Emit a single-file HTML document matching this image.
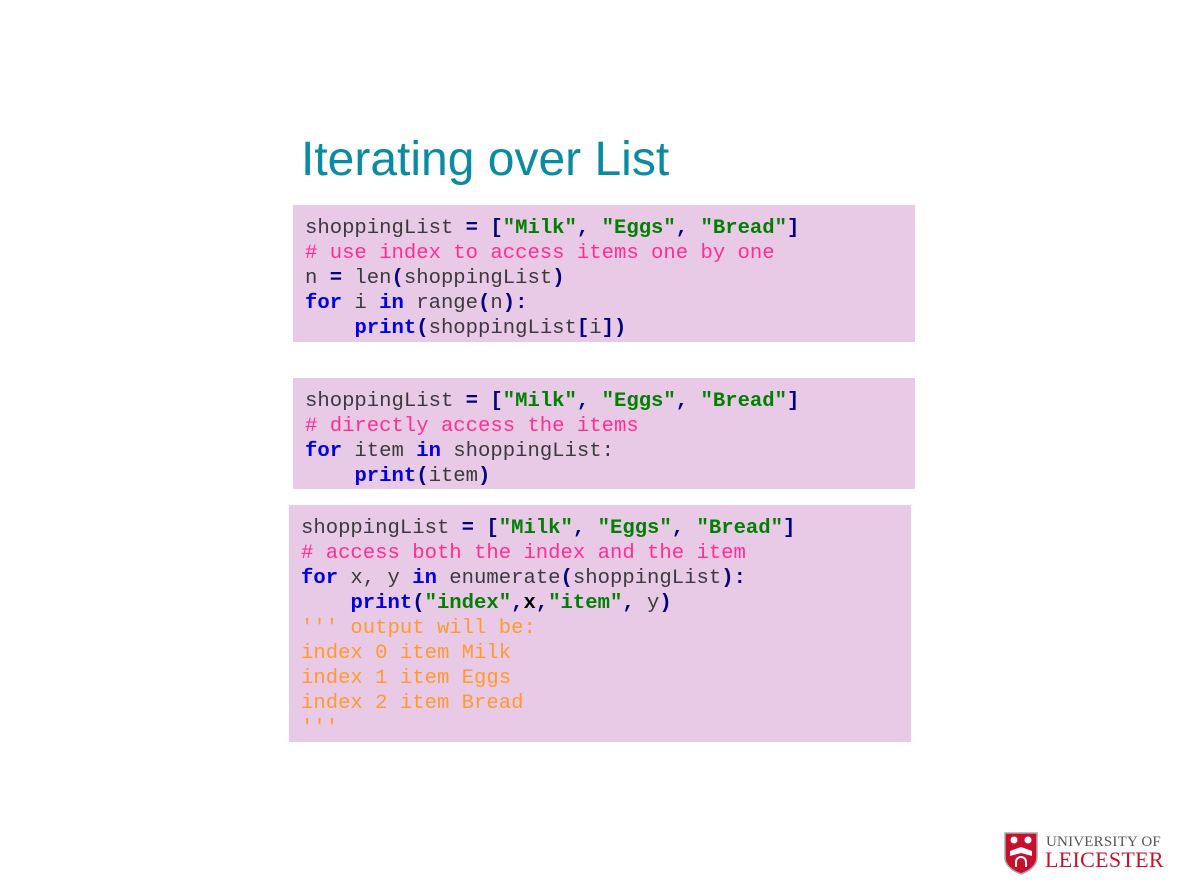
<!DOCTYPE html>
<html><head><meta charset="utf-8"><style>
body{margin:0;width:1188px;height:891px;background:#fff;position:relative;overflow:hidden}
h1{position:absolute;left:301px;top:128px;margin:0;font:48px "Liberation Sans",sans-serif;color:#0a8aa3;font-weight:normal;line-height:64px}
.box{position:absolute;background:#e9cae6;box-sizing:border-box;font-family:"Liberation Mono","Courier New",monospace;font-size:20.6px;line-height:25px;white-space:pre;color:#3a3a3a}
.o{color:#000080;font-weight:bold}.s{color:#008000;font-weight:bold}.c{color:#ff2d95}.k{color:#0000e0;font-weight:bold}.d{color:#ff9a30}.b{color:#000;font-weight:bold}
</style></head><body>
<h1>Iterating over List</h1>
<div class="box" style="left:293px;top:205px;width:622px;height:137px;padding:11px 0 0 12px">shoppingList <span class="o">= [</span><span class="s">"Milk"</span><span class="o">,</span> <span class="s">"Eggs"</span><span class="o">,</span> <span class="s">"Bread"</span><span class="o">]</span>
<span class="c"># use index to access items one by one</span>
n <span class="o">=</span> len<span class="o">(</span>shoppingList<span class="o">)</span>
<span class="k">for</span> i <span class="k">in</span> range<span class="o">(</span>n<span class="o">):</span>
    <span class="k">print</span><span class="o">(</span>shoppingList<span class="o">[</span>i<span class="o">])</span></div>
<div class="box" style="left:293px;top:378px;width:622px;height:111px;padding:11px 0 0 12px">shoppingList <span class="o">= [</span><span class="s">"Milk"</span><span class="o">,</span> <span class="s">"Eggs"</span><span class="o">,</span> <span class="s">"Bread"</span><span class="o">]</span>
<span class="c"># directly access the items</span>
<span class="k">for</span> item <span class="k">in</span> shoppingList:
    <span class="k">print</span><span class="o">(</span>item<span class="o">)</span></div>
<div class="box" style="left:289px;top:505px;width:622px;height:237px;padding:11px 0 0 12px">shoppingList <span class="o">= [</span><span class="s">"Milk"</span><span class="o">,</span> <span class="s">"Eggs"</span><span class="o">,</span> <span class="s">"Bread"</span><span class="o">]</span>
<span class="c"># access both the index and the item</span>
<span class="k">for</span> x, y <span class="k">in</span> enumerate<span class="o">(</span>shoppingList<span class="o">):</span>
    <span class="k">print</span><span class="o">(</span><span class="s">"index"</span><span class="o">,</span><span class="b">x</span><span class="o">,</span><span class="s">"item"</span><span class="o">,</span> y<span class="o">)</span>
<span class="d">''' output will be:
index 0 item Milk
index 1 item Eggs
index 2 item Bread
'''</span></div>
<svg style="position:absolute;left:1003px;top:831px" width="36" height="44" viewBox="0 0 36 44">
<path d="M2 2H34V26C34 35 26 40 18 43C10 40 2 35 2 26Z" fill="#c8102e" stroke="#aaa" stroke-width="1.5"/>
<circle cx="11" cy="9" r="3.5" fill="#fff"/><circle cx="25" cy="9" r="3.5" fill="#fff"/>
<path d="M7 20L18 16L29 20L29 25L18 22L7 25Z" fill="#fff"/>
<path d="M13 36V31A5 5 0 0 1 23 31V36" fill="none" stroke="#fff" stroke-width="2"/>
</svg>
<div style="position:absolute;left:1046px;top:834px;font:15px 'Liberation Serif',serif;color:#555;letter-spacing:0.2px">UNIVERSITY OF</div>
<div style="position:absolute;left:1045px;top:847px;font:22px 'Liberation Serif',serif;color:#c8102e;letter-spacing:0.3px">LEICESTER</div>
</body></html>
